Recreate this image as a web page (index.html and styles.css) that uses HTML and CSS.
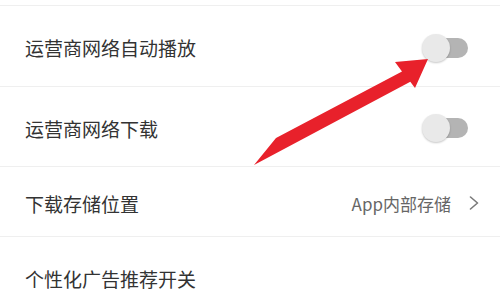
FILE: index.html
```html
<!DOCTYPE html>
<html lang="zh">
<head>
<meta charset="utf-8">
<link rel="stylesheet" href="styles.css">
</head>
<body>
<div class="page">
  <div class="top-gap"></div>
  <ul class="list">
    <li class="row row-tall">
      <span class="label">运营商网络自动播放</span>
      <span class="switch"><span class="track"></span><span class="knob"></span></span>
    </li>
    <li class="row row-tall">
      <span class="label">运营商网络下载</span>
      <span class="switch"><span class="track"></span><span class="knob"></span></span>
    </li>
    <li class="row row-short row-link">
      <span class="label">下载存储位置</span>
      <span class="value">App内部存储</span>
      <svg class="chev" width="10" height="14" viewBox="0 0 10 14"><path d="M1.5 1 L8.5 7 L1.5 13" fill="none" stroke="#7a7a7a" stroke-width="1.6" stroke-linecap="round" stroke-linejoin="round"/></svg>
    </li>
    <li class="row row-tall">
      <span class="label">个性化广告推荐开关</span>
    </li>
  </ul>
  <svg class="arrow" width="500" height="304" viewBox="0 0 500 304">
    <polygon points="276,138 402,71.4 395,62 428,59 415,88 410.3,81.7 254,165" fill="#e8212b"/>
  </svg>
</div>
</body>
</html>
```
FILE: styles.css
```css
html, body {
  margin: 0;
  padding: 0;
  background: #ffffff;
}
.page {
  position: relative;
  width: 500px;
  height: 304px;
  overflow: hidden;
  font-family: "Noto Sans CJK SC", "Noto Sans", sans-serif;
}
.top-gap {
  height: 5px;
}
.list {
  list-style: none;
  margin: 0;
  padding: 0;
}
.row {
  display: flex;
  align-items: center;
  border-top: 1px solid #efefef;
  padding: 3px 32px 0 25px;
  box-sizing: border-box;
}
.row-tall {
  height: 81px;
}
.row:nth-child(2) {
  height: 80px;
}
.row-short {
  height: 70px;
}
.row-link {
  padding-right: 21px;
}
.label {
  flex: 1;
  font-size: 19px;
  color: #333333;
  line-height: 1;
}
.value {
  font-size: 17px;
  color: #666666;
  line-height: 1;
  margin-right: 18px;
}
.chev {
  display: block;
}
.switch {
  display: grid;
  width: 46px;
  height: 30px;
  align-items: center;
}
.track {
  grid-area: 1 / 1;
  justify-self: end;
  width: 38px;
  height: 20px;
  border-radius: 10px;
  background: #b4b4b4;
}
.knob {
  grid-area: 1 / 1;
  justify-self: start;
  width: 28px;
  height: 28px;
  border-radius: 50%;
  background: #e9e9e9;
  box-shadow: 0 1px 2px rgba(0, 0, 0, 0.22);
}
.arrow {
  position: absolute;
  left: 0;
  top: 0;
  pointer-events: none;
}
```
